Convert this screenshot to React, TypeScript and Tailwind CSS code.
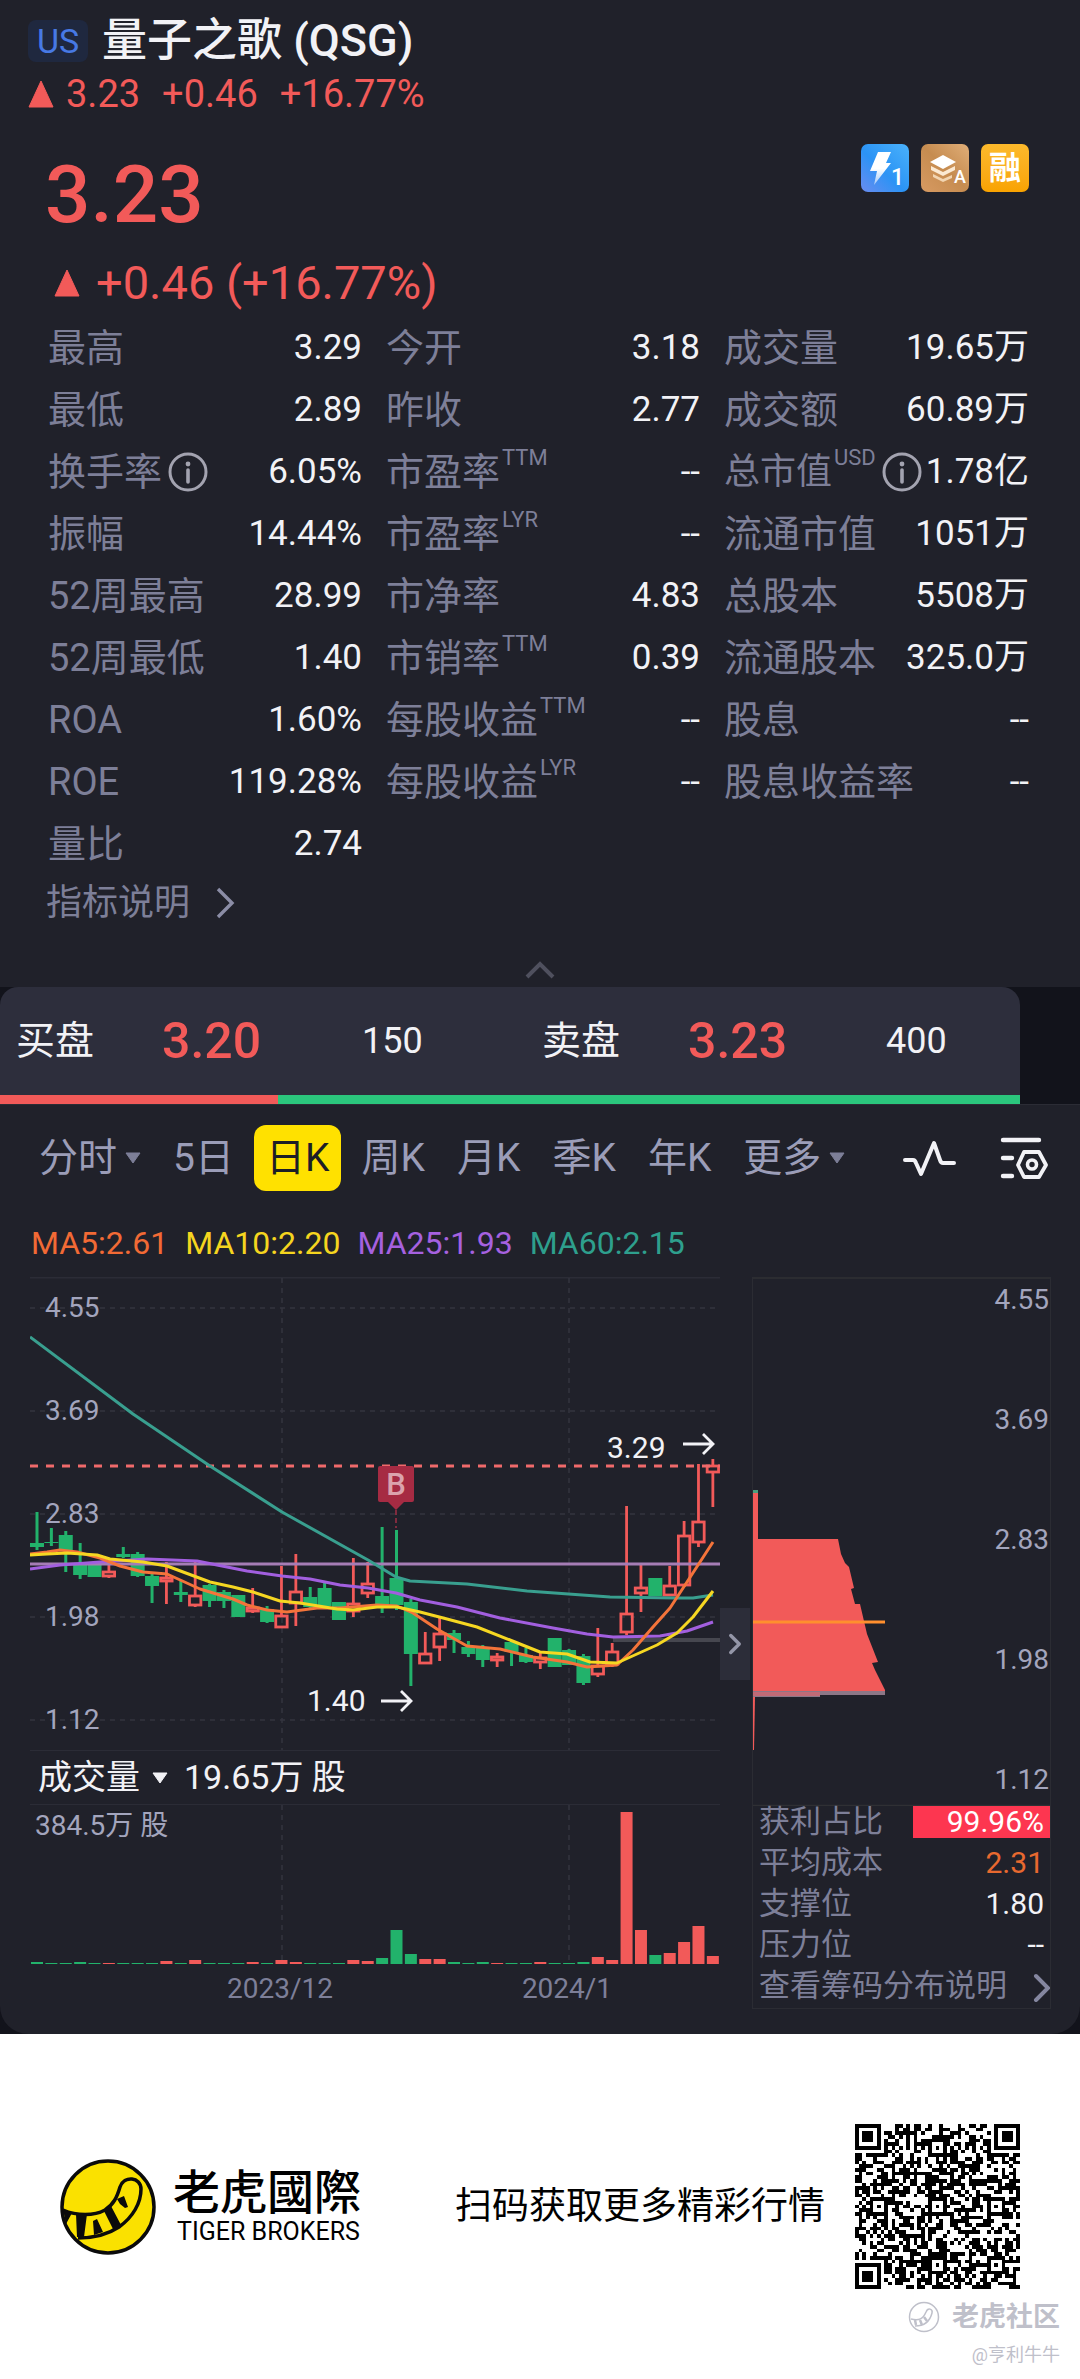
import { useState } from "react";
import { ChevronRight } from "lucide-react";

type Quote = {
  label: string;
  sup?: string;
  info?: boolean;
  value: string;
};

const quotes: Quote[][] = [
  [
    { label: "最高", value: "3.29" },
    { label: "最低", value: "2.89" },
    { label: "换手率", info: true, value: "6.05%" },
    { label: "振幅", value: "14.44%" },
    { label: "52周最高", value: "28.99" },
    { label: "52周最低", value: "1.40" },
    { label: "ROA", value: "1.60%" },
    { label: "ROE", value: "119.28%" },
    { label: "量比", value: "2.74" },
  ],
  [
    { label: "今开", value: "3.18" },
    { label: "昨收", value: "2.77" },
    { label: "市盈率", sup: "TTM", value: "--" },
    { label: "市盈率", sup: "LYR", value: "--" },
    { label: "市净率", value: "4.83" },
    { label: "市销率", sup: "TTM", value: "0.39" },
    { label: "每股收益", sup: "TTM", value: "--" },
    { label: "每股收益", sup: "LYR", value: "--" },
  ],
  [
    { label: "成交量", value: "19.65万" },
    { label: "成交额", value: "60.89万" },
    { label: "总市值", sup: "USD", info: true, value: "1.78亿" },
    { label: "流通市值", value: "1051万" },
    { label: "总股本", value: "5508万" },
    { label: "流通股本", value: "325.0万" },
    { label: "股息", value: "--" },
    { label: "股息收益率", value: "--" },
  ],
];

const periods = ["分时", "5日", "日K", "周K", "月K", "季K", "年K", "更多"];

const priceLabels = ["4.55", "3.69", "2.83", "1.98", "1.12"];

// [high, low, body top, body bottom, rising]
const candles: [number, number, number, number, boolean][] = [
  [235, 273, 266, 270, false],
  [251, 269, 265, 266, false],
  [254, 295, 258, 274, false],
  [266, 302, 286, 298, false],
  [286, 300, 286, 300, false],
  [287, 301, 294, 300, true],
  [270, 281, 277, 280, false],
  [275, 300, 277, 299, false],
  [296, 326, 299, 309, false],
  [285, 327, 300, 305, true],
  [303, 325, 315, 318, false],
  [285, 330, 318, 329, true],
  [307, 330, 308, 324, false],
  [313, 331, 315, 324, false],
  [318, 340, 318, 340, false],
  [311, 336, 330, 335, true],
  [329, 346, 332, 345, false],
  [289, 351, 338, 351, true],
  [277, 349, 314, 327, true],
  [310, 331, 320, 330, false],
  [306, 330, 311, 329, false],
  [325, 343, 325, 343, false],
  [281, 340, 326, 335, true],
  [285, 321, 306, 317, true],
  [250, 336, 319, 328, false],
  [253, 333, 301, 328, false],
  [322, 409, 325, 377, false],
  [355, 387, 376, 387, true],
  [341, 384, 356, 371, true],
  [353, 376, 356, 363, false],
  [364, 380, 370, 377, false],
  [368, 390, 371, 383, false],
  [376, 390, 379, 384, true],
  [363, 389, 365, 375, false],
  [371, 386, 378, 385, false],
  [376, 392, 380, 386, true],
  [361, 390, 361, 390, false],
  [372, 388, 373, 388, false],
  [377, 408, 379, 406, false],
  [351, 400, 388, 398, true],
  [366, 390, 374, 388, true],
  [229, 358, 336, 356, true],
  [288, 335, 310, 317, true],
  [301, 319, 301, 319, false],
  [289, 319, 308, 319, true],
  [244, 310, 258, 309, true],
  [187, 270, 244, 266, true],
  [182, 230, 188, 196, true],
];

const volumes = [
  2, 1, 1, 2, 1, 1, 1, 1, 1, 3, 1, 4, 1, 1, 1, 2, 1, 4, 2, 1, 1, 1, 4, 3, 6,
  34, 10, 5, 5, 2, 1, 2, 1, 1, 1, 2, 1, 1, 2, 7, 4, 152, 34, 9, 11, 22, 38, 8,
];

const RED = "#f25a59";
const GREEN = "#22b26b";

const candleX = (i: number) => 7 + i * 14.38;

const InfoIcon = () => (
  <svg viewBox="0 0 40 40" className="h-10 w-10 shrink-0" aria-hidden="true">
    <circle cx="20" cy="20" r="18" fill="none" stroke="#a3a3b0" strokeWidth="3" />
    <circle cx="20" cy="12" r="2.4" fill="#a3a3b0" />
    <path d="M20 18v12" stroke="#a3a3b0" strokeWidth="3.6" strokeLinecap="round" />
  </svg>
);

const UpTriangle = () => (
  <svg viewBox="0 0 26 28" className="h-7 w-[26px] shrink-0" aria-hidden="true">
    <path d="M13 1 25 27H1Z" fill="#f25a59" stroke="#f25a59" strokeLinejoin="round" />
  </svg>
);

const DownTriangle = ({ color }: { color: string }) => (
  <svg viewBox="0 0 16 12" className="h-3 w-4 shrink-0" aria-hidden="true">
    <path d="M1 1h14L8 11Z" fill={color} stroke={color} strokeLinejoin="round" />
  </svg>
);

const Header = () => (
  <header className="pt-[18px]">
    <div className="flex h-[46px] items-center gap-[14px] pl-7">
      <span className="flex h-[42px] w-[60px] items-center justify-center rounded-lg bg-[#1f283f] text-[34px] leading-none text-[#4779e4]">
        US
      </span>
      <h1 className="text-[45px] leading-[46px] font-medium whitespace-nowrap text-[#f2f2f6]">
        量子之歌 (QSG)
      </h1>
    </div>
    <div className="mt-2 flex h-11 items-center pl-7 text-[38px] text-[#f25a59]">
      <UpTriangle />
      <span className="ml-3">3.23</span>
      <span className="ml-[22px]">+0.46</span>
      <span className="ml-[22px]">+16.77%</span>
    </div>
    <div className="mt-7 flex items-start justify-between pr-[51px] pl-[45px]">
      <p className="text-[80px] leading-[102px] font-medium text-[#f25a59]">3.23</p>
      <div className="flex gap-3">
        <svg viewBox="0 0 48 48" className="h-12 w-12" role="img" aria-label="Level 1">
          <defs>
            <linearGradient id="lv" x1="0" y1="1" x2="1" y2="0">
              <stop offset="0" stopColor="#6a8cf0" />
              <stop offset="0.45" stopColor="#2b93f5" />
              <stop offset="1" stopColor="#4ab2fb" />
            </linearGradient>
            <linearGradient id="bolt" x1="0" y1="0" x2="0" y2="1">
              <stop offset="0.5" stopColor="#fff" />
              <stop offset="1" stopColor="#fff" stopOpacity="0.5" />
            </linearGradient>
          </defs>
          <rect width="48" height="48" rx="7" fill="url(#lv)" />
          <path d="M17 8h13l-5 11h5L13 41l3-14H9Z" fill="url(#bolt)" />
          <text x="30" y="41" fontSize="23" fontWeight="500" fill="#fff">
            1
          </text>
        </svg>
        <svg viewBox="0 0 48 48" className="h-12 w-12" role="img" aria-label="A">
          <defs>
            <linearGradient id="ly" x1="0" y1="1" x2="1" y2="0">
              <stop offset="0" stopColor="#d79a62" />
              <stop offset="0.5" stopColor="#c68c50" />
              <stop offset="1" stopColor="#e0ae78" />
            </linearGradient>
          </defs>
          <rect width="48" height="48" rx="7" fill="url(#ly)" />
          <path d="m22 11 13 7-13 7-13-7Z" fill="#fff" />
          <path d="m10 22 12 6 12-6v4l-12 6-12-6Z" fill="#fbe9d2" />
          <path d="m12 30 10 5 9-4v3l-9 4-10-5Z" fill="#f2d5b2" />
          <text x="33" y="39" fontSize="18" fontWeight="500" fill="#fff">
            A
          </text>
        </svg>
        <span className="flex h-12 w-12 items-center justify-center rounded-[7px] bg-linear-to-b from-[#fcb92b] to-[#f9a300] text-[32px] leading-none font-bold text-white">
          融
        </span>
      </div>
    </div>
    <div className="mt-[11px] flex h-[52px] items-center pl-[54px] text-[47px] text-[#f25a59]">
      <UpTriangle />
      <span className="ml-4">+0.46 (+16.77%)</span>
    </div>
  </header>
);

const QuoteRow = ({ item }: { item: Quote }) => {
  const tight = item.info && item.sup;
  return (
    <div className="flex h-[62px] items-center justify-between whitespace-nowrap">
      <dt className="flex items-center text-[#7d7f98]">
        <span className={tight ? "text-[36px]" : "text-[38px]"}>{item.label}</span>
        {item.sup && (
          <span className="mb-7 ml-0.5 text-[22px] leading-none">{item.sup}</span>
        )}
        {item.info && (
          <button type="button" aria-label={`${item.label}说明`} className="ml-1.5">
            <InfoIcon />
          </button>
        )}
      </dt>
      <dd className="text-[35px] text-[#f2f2f6]">{item.value}</dd>
    </div>
  );
};

const QuoteTable = () => (
  <section className="mt-2">
    <div className="grid grid-cols-3 gap-6 pr-[42px] pl-12">
      {quotes.map((column, i) => (
        <dl key={i} className="last:pr-[9px]">
          {column.map((item) => (
            <QuoteRow key={item.label + (item.sup || "")} item={item} />
          ))}
        </dl>
      ))}
    </div>
    <a
      href="#indicators"
      className="mt-1.5 flex h-11 items-center gap-4 pl-[46px] text-[36px] text-[#7d7f98]"
    >
      指标说明
      <svg viewBox="0 0 36 36" className="h-9 w-9" aria-hidden="true">
        <path d="m12 4 14 14-14 14" fill="none" stroke="#8b8da6" strokeWidth="3.4" />
      </svg>
    </a>
    <div className="mt-9 mb-2 flex justify-center">
      <button type="button" aria-label="收起">
        <svg viewBox="0 0 30 18" className="h-[18px] w-[30px]">
          <path d="m2 16 13-13 13 13" fill="none" stroke="#4f505e" strokeWidth="4" />
        </svg>
      </button>
    </div>
  </section>
);

const OrderBar = () => (
  <section className="bg-[#12131b] pr-[60px]">
    <div className="overflow-hidden rounded-t-[18px] bg-[#2d2e3c]">
      <div className="grid h-[108px] grid-cols-2 items-center text-[39px] text-[#f2f2f6]">
        <div className="flex items-center pl-4">
          <span className="w-[146px]">买盘</span>
          <span className="w-[200px] text-[50px] font-medium text-[#f25a59]">3.20</span>
          <span className="text-[36px]">150</span>
        </div>
        <div className="flex items-center pl-8">
          <span className="w-[146px]">卖盘</span>
          <span className="w-[198px] text-[50px] font-medium text-[#f25a59]">3.23</span>
          <span className="text-[36px]">400</span>
        </div>
      </div>
      <div className="flex h-[9px] bg-[#2bc67d]">
        <div className="w-3/11 bg-[#f25a59]" />
      </div>
    </div>
  </section>
);

const PeriodTabs = () => {
  const [active, setActive] = useState("日K");

  return (
    <nav className="flex items-center border-t border-[#2b2c35] pt-5 pr-8 pl-[27px]">
      <div className="flex gap-2">
        {periods.map((p) => (
          <button
            key={p}
            type="button"
            onClick={() => setActive(p)}
            className={
              active === p
                ? "flex h-[66px] items-center rounded-xl bg-[#ffe100] px-3 text-[39px] whitespace-nowrap text-[#1d1e26]"
                : "flex h-[66px] items-center gap-2 px-3 text-[39px] whitespace-nowrap text-[#9b9db8]"
            }
          >
            {p}
            {(p === "分时" || p === "更多") && <DownTriangle color="#7d7f98" />}
          </button>
        ))}
      </div>
      <div className="ml-auto flex shrink-0 items-center gap-[44px]">
        <button type="button" aria-label="画线">
          <svg viewBox="0 0 54 40" className="h-10 w-[54px]">
            <path
              d="M3 22h8q2 0 3 3l5 11L32 5l6 17q1 3 3 3h11"
              fill="none"
              stroke="#f2f2f6"
              strokeWidth="4"
              strokeLinecap="round"
              strokeLinejoin="round"
            />
          </svg>
        </button>
        <button type="button" aria-label="指标设置">
          <svg viewBox="0 0 48 44" className="h-11 w-12">
            <g fill="none" stroke="#f2f2f6" strokeWidth="4.4" strokeLinecap="round">
              <path d="M3 4h36M3 22h9M3 40h9" />
              <path d="M24 16h15l7 13-7 12H24l-6-12Z" strokeWidth="3.8" strokeLinejoin="round" />
              <circle cx="32" cy="28.500" r="4.500" strokeWidth="3.600" />
            </g>
          </svg>
        </button>
      </div>
    </nav>
  );
};

const MaLegend = () => (
  <div className="mt-8 flex h-10 items-center gap-[17px] pl-[31px] text-[32px] whitespace-nowrap">
    <span className="text-[#f26a35]">MA5:2.61</span>
    <span className="text-[#f5d51f]">MA10:2.20</span>
    <span className="text-[#a661e0]">MA25:1.93</span>
    <span className="text-[#2e9f8d]">MA60:2.15</span>
  </div>
);

const PriceChart = () => (
  <svg viewBox="0 0 690 473" className="block w-full" role="img" aria-label="日K">
    <g stroke="#2b2c36" strokeWidth="1.500">
      <path d="M0 .75h690" />
      <path
        d="M0 31h690M0 134h690M0 237h690M0 340h690M0 443h690M252 1v472M539 1v472"
        stroke="#33343f"
        strokeDasharray="5 5"
      />
    </g>
    <g fill="#a3a5bd" fontSize="28">
      {priceLabels.map((label, i) => (
        <text key={label} x="15" y={40 + i * 103}>
          {label}
        </text>
      ))}
    </g>
    <path d="M583 363h107" stroke="#46474f" strokeWidth="4" />
    {candles.map(([high, low, top, bottom, rising], i) => {
      const x = candleX(i);
      return rising ? (
        <g key={i} fill="none" stroke={RED} strokeWidth="2.800">
          <path d={`M${x} ${high}V${top}M${x} ${bottom}V${low}`} />
          <rect x={x - 5.7} y={top + 1} width="11.400" height={Math.max(bottom - top - 2, 2)} />
        </g>
      ) : (
        <g key={i} fill={GREEN}>
          <rect x={x - 1.5} y={high} width="3" height={low - high} />
          <rect x={x - 7} y={top} width="14" height={bottom - top} />
        </g>
      );
    })}
    <path d="M0 189h690" stroke="#f06a6b" strokeWidth="3" strokeDasharray="8 8" />
    <path d="M0 287h690" stroke="#a57db5" strokeWidth="3" />
    <g fill="none" strokeWidth="3" strokeLinejoin="round">
      <polyline
        stroke="#399f8f"
        points="0,60 103,137 180,189 252,235 338,283 366,300 380,304 437,307 497,314 580,320 647,321 663,321 683,318"
      />
      <polyline
        stroke="#a25fdf"
        points="0,292 30,288 70,285 117,282 167,284 217,294 252,299 280,302 310,308 338,311 366,316 390,323 427,330 470,341 523,351 557,357 583,360 630,359 657,354 683,345"
      />
      <polyline
        stroke="#f4743a"
        points="0,277 17,275 30,273 47,275 70,281 90,289 113,295 137,297 170,312 203,322 217,328 237,333 257,335 287,331 310,331 347,328 367,329 383,336 407,352 437,369 470,372 503,380 537,385 557,390 587,388 603,373 623,350 640,331 657,305 683,265"
      />
      <polyline
        stroke="#f6d722"
        points="0,278 17,277 37,276 67,278 80,282 113,285 137,289 180,305 203,310 223,315 250,324 270,326 307,332 323,333 347,330 367,330 390,335 417,342 447,350 480,363 510,375 537,377 560,385 587,386 607,377 627,368 647,356 663,340 683,314"
      />
    </g>
    <path d="M366 233v18" stroke="#a02f45" strokeWidth="1.500" strokeDasharray="5 3" />
    <path
      d="M350 189h32q2 0 2 2v32q0 2-2 2h-8l-8 8-8-8h-8q-2 0-2-2v-32q0-2 2-2Z"
      fill="#a62b43"
    />
    <text x="366" y="218" fontSize="31" fontWeight="500" textAnchor="middle" fill="#dba3ad">
      B
    </text>
    <g fill="#f2f2f6" fontSize="30">
      <text x="277" y="434">
        1.40
      </text>
      <text x="577" y="181">
        3.29
      </text>
    </g>
    <path
      d="M351 424h30M371 414l10 10-10 10M653 167h30M673 157l10 10-10 10"
      fill="none"
      stroke="#f2f2f6"
      strokeWidth="2.800"
    />
  </svg>
);

const VolumeChart = () => (
  <svg viewBox="0 0 690 204" className="block w-full" role="img" aria-label="成交量">
    <path d="M252 0v159M539 0v159" stroke="#33343f" strokeWidth="1.500" strokeDasharray="5 5" />
    <text x="5" y="30" fontSize="28" fill="#a3a5bd">
      384.5万 股
    </text>
    {volumes.map((v, i) => (
      <rect
        key={i}
        x={candleX(i) - 6}
        y={159 - v}
        width="12"
        height={v}
        fill={candles[i][4] ? RED : GREEN}
      />
    ))}
    <g fill="#7d7f98" fontSize="28" textAnchor="middle">
      <text x="250" y="193">
        2023/12
      </text>
      <text x="537" y="193">
        2024/1
      </text>
    </g>
  </svg>
);

const ChipDistribution = () => (
  <svg viewBox="0 0 297 529" className="block w-full" role="img" aria-label="筹码分布">
    <path d="M0 1h297M0 528.500h297" stroke="#2f3034" strokeWidth="1.500" />
    <path
      d="M0 213h5v49h80l3 15 4 9 4 4 5 21-3 1 4 15h5l7 30 11 28-6 1 3 7 10 20v2H0Z"
      fill="#f25a59"
    />
    <path d="M0 213h5v3H0Z" fill="#4a9f7e" />
    <path d="M0 414h132v4H67v2H0Z" fill="#8d7787" />
    <path d="M0 415h67v4H0Z" fill="#c06a76" />
    <path d="M0 420h2l-1 53H0Z" fill="#f25a59" />
    <path d="M0 345h132" stroke="#ff8f2e" strokeWidth="3" />
    <g fill="#a3a5bd" fontSize="28" textAnchor="end">
      {priceLabels.map((label, i) => (
        <text key={label} x="296" y={32 + i * 120}>
          {label}
        </text>
      ))}
    </g>
  </svg>
);

const ChartPanel = () => (
  <section className="mt-[14px] flex pr-[29px] pb-[25px] pl-[30px]">
    <div className="min-w-0 flex-1">
      <PriceChart />
      <div className="flex h-[55px] items-center border-y border-[#2b2c36] pl-2 text-[34px] text-[#f2f2f6]">
        <button type="button" className="flex items-center gap-3">
          成交量
          <DownTriangle color="#f2f2f6" />
        </button>
        <span className="ml-4">19.65万 股</span>
      </div>
      <VolumeChart />
    </div>
    <div className="w-8 shrink-0">
      <button
        type="button"
        aria-label="收起筹码"
        className="mt-[331px] flex h-[72px] w-[30px] items-center justify-center bg-[#2c2d39]"
      >
        <ChevronRight size={34} strokeWidth={2.4} className="shrink-0 text-[#9496a8]" />
      </button>
    </div>
    <div className="w-[299px] shrink-0 border-x border-b border-[#2b2c33]">
      <ChipDistribution />
      <dl className="flex flex-col gap-[9px] pl-1.5 text-[31px] leading-8 text-[#7d7f98]">
        <div className="flex justify-between">
          <dt>获利占比</dt>
          <dd className="w-[137px] bg-[#fd3650] pr-1.5 text-right text-[30px] text-white">
            99.96%
          </dd>
        </div>
        <div className="flex justify-between">
          <dt>平均成本</dt>
          <dd className="pr-1.5 text-[30px] text-[#e8692f]">2.31</dd>
        </div>
        <div className="flex justify-between">
          <dt>支撑位</dt>
          <dd className="pr-1.5 text-[30px] text-[#f2f2f6]">1.80</dd>
        </div>
        <div className="flex justify-between">
          <dt>压力位</dt>
          <dd className="pr-1.5 text-[30px] text-[#f2f2f6]">--</dd>
        </div>
      </dl>
      <a
        href="#chips"
        className="mt-[9px] mb-1.5 flex items-center justify-between pl-1.5 text-[31px] leading-8 whitespace-nowrap text-[#7d7f98]"
      >
        查看筹码分布说明
        <svg viewBox="0 0 18 32" className="h-8 w-[18px]" aria-hidden="true">
          <path
            d="m4 6 12 12L4 30"
            fill="none"
            stroke="#8587a0"
            strokeWidth="4"
            strokeLinecap="round"
          />
        </svg>
      </a>
    </div>
  </section>
);

const TigerLogo = () => (
  <svg viewBox="0 0 96 96" className="h-24 w-24 shrink-0" aria-hidden="true">
    <circle cx="48" cy="48" r="46" fill="#fae100" stroke="#0b0b0b" strokeWidth="3.500" />
    <path
      d="M3 51c14 6 31 6 42 0 9-6 12-13 15-23 4-12 21-10 21 2 0 14-8 28-22 38-12 8-26 11-41 11"
      fill="none"
      stroke="#0b0b0b"
      strokeWidth="3.500"
    />
    <path
      d="M3 50l9 4-6 11ZM16 55h11l-3 23h-7ZM33 62l4-2 6 13-9 3ZM44 52l7-5 10 19-8 4ZM57 40l7-3 4 11-3 1-5-4Z"
      fill="#0b0b0b"
    />
  </svg>
);

const QR_SIZE = 45;

const inFinder = (x: number, y: number) => {
  const cx = x > 22 ? QR_SIZE - 4 : 3;
  const cy = y > 22 ? QR_SIZE - 4 : 3;
  if (cx !== 3 && cy !== 3) return null;
  const d = Math.max(Math.abs(x - cx), Math.abs(y - cy));
  return d > 4 ? null : d !== 4 && d !== 2;
};

const qrPath = () => {
  let d = "";
  let seed = 7;
  const marks = [6, 22, 38];
  for (let y = 0; y < QR_SIZE; y++) {
    for (let x = 0; x < QR_SIZE; x++) {
      seed = (seed * 16807) % 2147483647;
      let on = seed % 100 < 51;
      if (y === 6) on = x % 2 === 0;
      if (x === 6) on = y % 2 === 0;
      marks.forEach((my) =>
        marks.forEach((mx) => {
          const r = Math.max(Math.abs(x - mx), Math.abs(y - my));
          if (r <= 2) on = r !== 1;
        })
      );
      const finder = inFinder(x, y);
      if (finder !== null) on = finder;
      if (on) d += `M${x} ${y}h1v1h-1Z`;
    }
  }
  return d;
};

const Footer = () => (
  <footer className="bg-white pt-[90px] pb-3">
    <div className="flex items-center pr-[60px] pl-[60px]">
      <TigerLogo />
      <div className="ml-[17px] whitespace-nowrap text-black">
        <p className="text-[47px] leading-[50px] font-medium [font-family:'Noto_Sans_CJK_TC',sans-serif]">
          老虎國際
        </p>
        <p className="pl-1 text-[25px] leading-9">TIGER BROKERS</p>
      </div>
      <p className="mr-[30px] ml-auto text-[37px] whitespace-nowrap text-black">
        扫码获取更多精彩行情
      </p>
      <svg
        viewBox="0 0 45 45"
        className="h-[165px] w-[165px] shrink-0"
        shapeRendering="crispEdges"
        role="img"
        aria-label="二维码"
      >
        <path d={qrPath()} fill="#000" />
      </svg>
    </div>
    <div className="mt-2.5 flex flex-col items-end pr-5 text-[#bfc0ca]">
      <div className="flex items-center gap-3 text-[27px] leading-9 font-bold">
        <svg viewBox="0 0 32 32" className="h-8 w-8" aria-hidden="true">
          <g fill="none" stroke="#bfc0ca" strokeWidth="1.500">
            <circle cx="16" cy="16" r="14.500" />
            <path d="M3 18c8 2 12 0 15-7 2-5 7-3 6 1-2 8-8 13-17 13" />
            <path d="m7 19 1 5M12 19l2 5M16 16l3 4" strokeWidth="2.500" />
          </g>
        </svg>
        老虎社区
      </div>
      <p className="mt-1.5 text-[18px] leading-7">@亨利牛牛</p>
    </div>
  </footer>
);

const App: React.FC = () => {
  return (
    <div className="min-h-screen bg-white [font-family:Roboto,'Noto_Sans_CJK_SC',sans-serif]">
      <div className="bg-[#12131b]">
        <main className="rounded-b-[28px] bg-[#20212a]">
          <Header />
          <QuoteTable />
          <OrderBar />
          <PeriodTabs />
          <MaLegend />
          <ChartPanel />
        </main>
      </div>
      <Footer />
    </div>
  );
};

export default App;
